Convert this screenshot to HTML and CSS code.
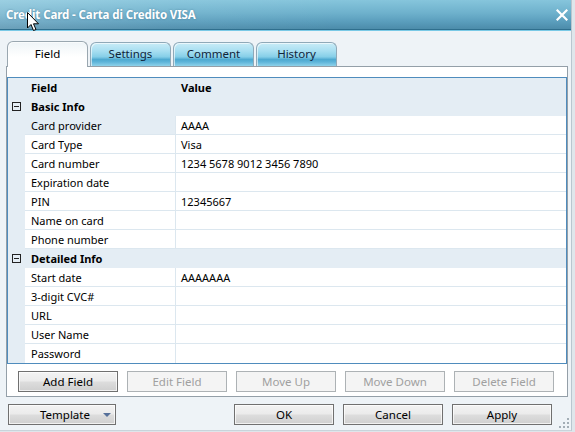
FILE: index.html
```html
<!DOCTYPE html>
<html>
<head>
<meta charset="utf-8">
<link rel="stylesheet" href="styles.css">
</head>
<body>
<div class="window">
  <div class="titlebar">
    <span class="title">Credit Card - Carta di Credito VISA</span>
    <svg class="close" width="12" height="12" viewBox="0 0 12 12"><path d="M1.5 1.5 L10.5 10.5 M10.5 1.5 L1.5 10.5" stroke="#fff" stroke-width="2.2" stroke-linecap="square"/></svg>
  </div>
  <svg class="cursor" width="13" height="20" viewBox="0 0 13 20"><path d="M0.5 0.5 L0.5 16 L4 12.5 L6.5 18.5 L9 17.5 L6.5 11.8 L11.5 11.8 Z" fill="#fff" stroke="#000" stroke-width="1" stroke-linejoin="miter"/></svg>
  <div class="content">
    <div class="tabs">
      <div class="tab active">Field</div>
      <div class="tab">Settings</div>
      <div class="tab">Comment</div>
      <div class="tab">History</div>
    </div>
    <div class="panel">
      <div class="grid">
        <div class="row head">
          <div class="gut"></div>
          <div class="name">Field</div>
          <div class="val">Value</div>
        </div>
        <div class="row group">
          <div class="gut"><span class="minus"></span></div>
          <div class="name">Basic Info</div>
          <div class="val"></div>
        </div>
        <div class="row"><div class="gut"></div><div class="name sel">Card provider</div><div class="val">AAAA</div></div>
        <div class="row"><div class="gut"></div><div class="name">Card Type</div><div class="val">Visa</div></div>
        <div class="row"><div class="gut"></div><div class="name">Card number</div><div class="val">1234 5678 9012 3456 7890</div></div>
        <div class="row"><div class="gut"></div><div class="name">Expiration date</div><div class="val"></div></div>
        <div class="row"><div class="gut"></div><div class="name">PIN</div><div class="val">12345667</div></div>
        <div class="row"><div class="gut"></div><div class="name">Name on card</div><div class="val"></div></div>
        <div class="row"><div class="gut"></div><div class="name">Phone number</div><div class="val"></div></div>
        <div class="row group">
          <div class="gut"><span class="minus"></span></div>
          <div class="name">Detailed Info</div>
          <div class="val"></div>
        </div>
        <div class="row"><div class="gut"></div><div class="name">Start date</div><div class="val">AAAAAAA</div></div>
        <div class="row"><div class="gut"></div><div class="name">3-digit CVC#</div><div class="val"></div></div>
        <div class="row"><div class="gut"></div><div class="name">URL</div><div class="val"></div></div>
        <div class="row"><div class="gut"></div><div class="name">User Name</div><div class="val"></div></div>
        <div class="row last"><div class="gut"></div><div class="name">Password</div><div class="val"></div></div>
      </div>
      <div class="actions">
        <div class="btn">Add Field</div>
        <div class="btn disabled">Edit Field</div>
        <div class="btn disabled">Move Up</div>
        <div class="btn disabled">Move Down</div>
        <div class="btn disabled">Delete Field</div>
      </div>
    </div>
    <div class="footer">
      <div class="btn template"><span>Template</span><span class="arrow"></span></div>
      <div class="spacer"></div>
      <div class="btn">OK</div>
      <div class="btn">Cancel</div>
      <div class="btn">Apply</div>
    </div>
  </div>
  <div class="grip">
    <span></span><span></span><span></span><span></span><span></span><span></span>
  </div>
</div>
</body>
</html>
```
FILE: styles.css
```css
* { box-sizing: border-box; }
html, body { margin: 0; padding: 0; }
body {
  width: 575px;
  height: 432px;
  overflow: hidden;
  font-family: "Noto Sans", "Liberation Sans", sans-serif;
  font-size: 11px;
  color: #000;
  background: #dfe6eb;
}
.window {
  position: relative;
  width: 572px;
  height: 431px;
  background: #eef3f7;
  border-right: 1px solid #b9c6cf;
  border-bottom: 1px solid #c9d4db;
  display: flex;
  flex-direction: column;
}
.titlebar {
  height: 30px;
  flex: none;
  display: flex;
  align-items: center;
  padding-left: 6px;
  background: linear-gradient(100deg, rgba(255,255,255,0.18) 0%, rgba(255,255,255,0.05) 30%, rgba(255,255,255,0) 60%),
              linear-gradient(#86c5dc 0%, #6eb1cc 45%, #5a9dbc 75%, #4c8caa 100%);
  border-bottom: 1px solid #2f6f8e;
  box-shadow: 0 1px 0 #79c9e6;
}
.title {
  color: #fff;
  font-weight: bold;
  font-size: 11.5px;
  letter-spacing: -0.1px;
  text-shadow: 0 0 2px rgba(40,90,120,0.5);
  flex: 1;
}
.close { margin-right: 3px; }
.cursor { position: absolute; left: 27px; top: 12px; }
.content {
  flex: 1;
  display: flex;
  flex-direction: column;
  padding: 11px 4px 0 6px;
}
.tabs {
  display: flex;
  gap: 2px;
  padding-left: 1px;
  height: 25px;
  align-items: flex-end;
}
.tab {
  width: 81px;
  height: 24px;
  border: 1px solid #8fa9b8;
  border-bottom: none;
  border-radius: 6px 6px 0 0;
  display: flex;
  align-items: center;
  justify-content: center;
  padding-bottom: 2px;
  color: #10243a;
  font-size: 11.5px;
  background: linear-gradient(#c9ecf7 0%, #a7def1 35%, #86cfe8 60%, #4ea9d0 72%, #5db4d9 82%, #8fd2ea 100%);
  box-shadow: inset 1px 1px 0 rgba(255,255,255,0.6);
}
.tab.active {
  width: 81px;
  height: 26px;
  margin-bottom: -1px;
  border-color: #9aa7b0;
  background: linear-gradient(#eef4f7, #ffffff 60%);
  color: #000;
  position: relative;
  z-index: 1;
}
.panel {
  background: #fff;
  border: 1px solid #949fa8;
  width: 562px;
  padding: 10px 1px 4px 0;
}
.grid {
  border: 1px solid #4f8cbd;
  background: #e4edf4;
  width: 560px;
}
.row {
  display: flex;
  height: 19px;
}
.gut { width: 17px; flex: none; display: flex; align-items: center; justify-content: center; }
.name {
  width: 151px;
  flex: none;
  padding-left: 6px;
  display: flex;
  align-items: center;
  background: #fff;
  border-bottom: 1px solid #dce7ef;
  border-right: 1px solid #dce7ef;
  white-space: nowrap;
}
.val {
  flex: 1;
  padding-left: 5px;
  display: flex;
  align-items: center;
  background: #fff;
  border-bottom: 1px solid #dce7ef;
  white-space: nowrap;
}
.name.sel { background: #e4edf4; }
.row.head .name, .row.head .val,
.row.group .name, .row.group .val {
  background: transparent;
  border: none;
  font-weight: bold;
}
.row.head .name, .row.group .name { padding-left: 6px; }
.row.head .val { padding-left: 5px; }
.row.last .name, .row.last .val { border-bottom: none; }
.minus {
  width: 9px;
  height: 9px;
  border: 1px solid #222;
  position: relative;
}
.minus::after {
  content: "";
  position: absolute;
  left: 1px;
  top: 3px;
  width: 5px;
  height: 1px;
  background: #222;
}
.actions {
  display: flex;
  gap: 9px;
  padding: 7px 0 0 11px;
}
.btn {
  width: 100px;
  height: 21px;
  flex: none;
  border: 1px solid #707070;
  display: flex;
  align-items: center;
  justify-content: center;
  background: linear-gradient(#f3f3f3 0%, #ebebeb 48%, #dddddd 52%, #cfcfcf 100%);
  box-shadow: inset 0 0 0 1px rgba(255,255,255,0.7);
  color: #000;
  font-size: 11.5px;
}
.btn.disabled {
  border-color: #adb2b5;
  background: #f4f4f4;
  color: #a0a0a0;
  box-shadow: none;
}
.footer {
  display: flex;
  gap: 9px;
  padding: 7px 0 0 2px;
}
.spacer { flex: none; width: 100px; }
.btn.template {
  width: 108px;
  justify-content: flex-start;
  padding-left: 31px;
}
.btn.template .arrow {
  width: 0;
  height: 0;
  border-left: 4px solid transparent;
  border-right: 4px solid transparent;
  border-top: 4px solid #56709a;
  margin-left: 13px;
  margin-top: 1px;
}
.grip {
  position: absolute;
  right: 2px;
  bottom: 2px;
  width: 10px;
  height: 10px;
}
.grip span {
  position: absolute;
  width: 2px;
  height: 2px;
  background: #a3aeb6;
}
.grip span:nth-child(1) { right: 0; bottom: 0; }
.grip span:nth-child(2) { right: 4px; bottom: 0; }
.grip span:nth-child(3) { right: 8px; bottom: 0; }
.grip span:nth-child(4) { right: 0; bottom: 4px; }
.grip span:nth-child(5) { right: 4px; bottom: 4px; }
.grip span:nth-child(6) { right: 0; bottom: 8px; }
```
